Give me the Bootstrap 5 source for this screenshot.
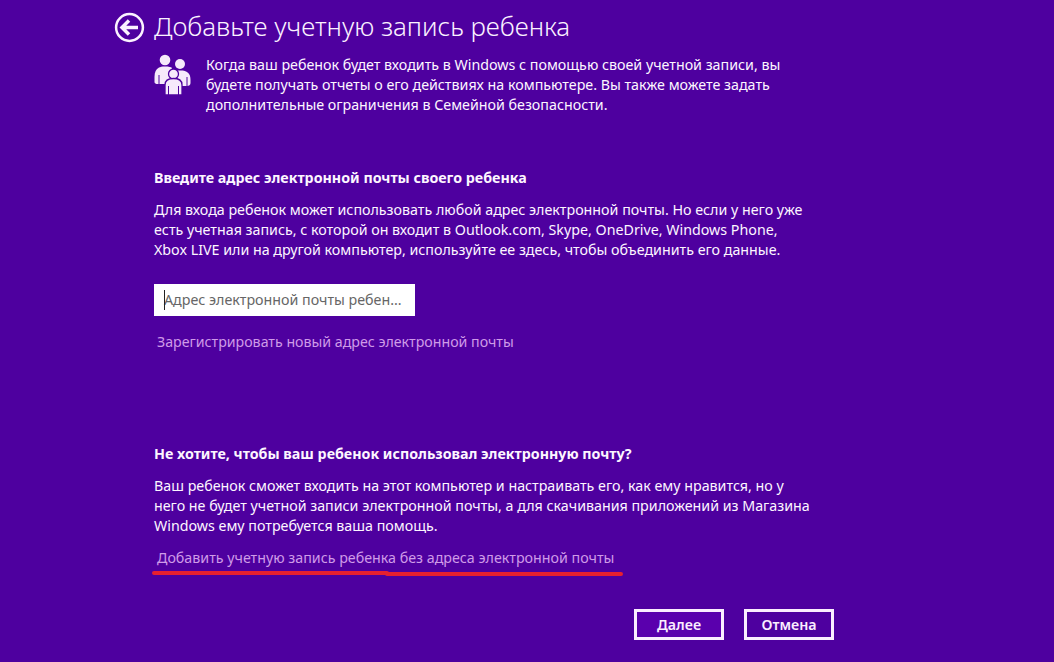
<!DOCTYPE html>
<html lang="ru"><head><meta charset="utf-8">
<link href="https://cdn.jsdelivr.net/npm/bootstrap@5.3.0/dist/css/bootstrap.min.css" rel="stylesheet">
<style>
html,body{height:100%}
body{background:#4e009f;color:#fdf6ff;font-family:"Noto Sans","Open Sans","Liberation Sans",sans-serif;font-size:14.25px;line-height:20.2px;overflow:hidden;width:1054px;height:662px}
.shell{width:1054px;height:662px;padding-left:114px;position:relative}
.back-ic{width:31px;height:31px;flex:none;margin-top:4px}
.hdr{height:53px;padding-top:8px;gap:9px}
.ttl{font-size:25.9px;line-height:36px;font-weight:300;margin:0;color:#fbf2ff}
.body-col{margin-left:40px;width:660px}
.intro{gap:15px;height:100px}
.fam{width:37px;height:42px;flex:none}
.intro p{margin:2px 0 0;width:600px}
.sec-h{font-size:14.25px;font-weight:700;line-height:20px;margin:0 0 12px}
.txt{margin:0}
.s1{margin-top:15px}
.fld{width:261px;height:32px;margin-top:23px;background:#fff;color:#666;padding:0 0 0 10px;line-height:32px}
.lnk{display:block;color:#cf9be8;text-decoration:none;margin-left:3px;font-size:14.2px}
.l1{margin-top:16px}
.s2{margin-top:92px}
.l2{margin-top:12px;font-size:14.25px}
.acts{margin-top:40px;gap:20px;width:680px}
.act{width:90px;height:31px;border:3px solid #fbeeff;border-radius:0;background:transparent;color:#fbeeff;font-weight:600;font-size:14.25px;padding:0;line-height:25px}
.act.first{background:#5a00ad}
.mark-red{position:absolute;left:151px;top:571px;width:473px;height:7px}
.caret-bar{position:absolute;left:164px;top:290px;width:1px;height:20px;background:#222}
</style></head><body>
<div class="shell">
 <div class="d-flex align-items-start hdr">
  <svg class="back-ic" viewBox="0 0 31 31"><circle cx="15.5" cy="15.5" r="13.4" fill="none" stroke="#fbf2ff" stroke-width="2.5"/><path d="M24 15.500H9M15 8.500l-7 7 7 7" fill="none" stroke="#fbf2ff" stroke-width="3.5"/></svg>
  <h1 class="ttl">Добавьте учетную запись ребенка</h1>
 </div>
 <div class="body-col">
  <div class="d-flex intro">
   <svg class="fam" viewBox="0 0 37 42" fill="#f6e9fb">
    <circle cx="11" cy="7" r="5.300"/>
    <circle cx="26" cy="11" r="5"/>
    <path d="M5 14.500C2 16 .5 19 .5 24v5c0 1.500 1.500 2 3 2H13l4-5 1-11c-1-1-3-1.500-7-1.500-3 0-5 .5-6 1z"/>
    <path d="M21 18.500c1-.5 3-1 5.500-1 6.500 0 10 2.500 10 9.500v3c0 2-1.500 3-3.500 3h-9l-4-8z"/>
    <path d="M5 22v9M33 24v9" stroke="#4e009f" stroke-width="1" fill="none"/>
    <circle cx="19.500" cy="21" r="5" stroke="#4e009f" stroke-width="1.300"/>
    <path d="M11 42V32c0-5 3-6.500 8.500-6.500S28 27 28 32v10z" stroke="#4e009f" stroke-width="1.300"/>
    <path d="M14.500 33v9M24.500 33v9" stroke="#4e009f" stroke-width="1" fill="none"/>
   </svg>
   <p>Когда ваш ребенок будет входить в Windows с помощью своей учетной записи, вы будете получать отчеты о его действиях на компьютере. Вы также можете задать дополнительные ограничения в Семейной безопасности.</p>
  </div>
  <div class="s1">
   <h2 class="sec-h">Введите адрес электронной почты своего ребенка</h2>
   <p class="txt">Для входа ребенок может использовать любой адрес электронной почты. Но если у него уже есть учетная запись, с которой он входит в Outlook.com, Skype, OneDrive, Windows Phone, Xbox LIVE или на другой компьютер, используйте ее здесь, чтобы объединить его данные.</p>
   <div class="fld">Адрес электронной почты ребен...</div>
   <a class="lnk l1" href="#">Зарегистрировать новый адрес электронной почты</a>
  </div>
  <div class="s2">
   <h2 class="sec-h">Не хотите, чтобы ваш ребенок использовал электронную почту?</h2>
   <p class="txt">Ваш ребенок сможет входить на этот компьютер и настраивать его, как ему нравится, но у него не будет учетной записи электронной почты, а для скачивания приложений из Магазина Windows ему потребуется ваша помощь.</p>
   <a class="lnk l2" href="#">Добавить учетную запись ребенка без адреса электронной почты</a>
  </div>
  <div class="d-flex justify-content-end acts">
   <button class="btn act first">Далее</button>
   <button class="btn act">Отмена</button>
  </div>
 </div>
 <div class="caret-bar"></div>
 <svg class="mark-red" viewBox="0 0 473 7"><path d="M3 2H236M236 3H470" stroke="#e8202e" stroke-width="4" stroke-linecap="round" fill="none"/></svg>
</div>
</body></html>
